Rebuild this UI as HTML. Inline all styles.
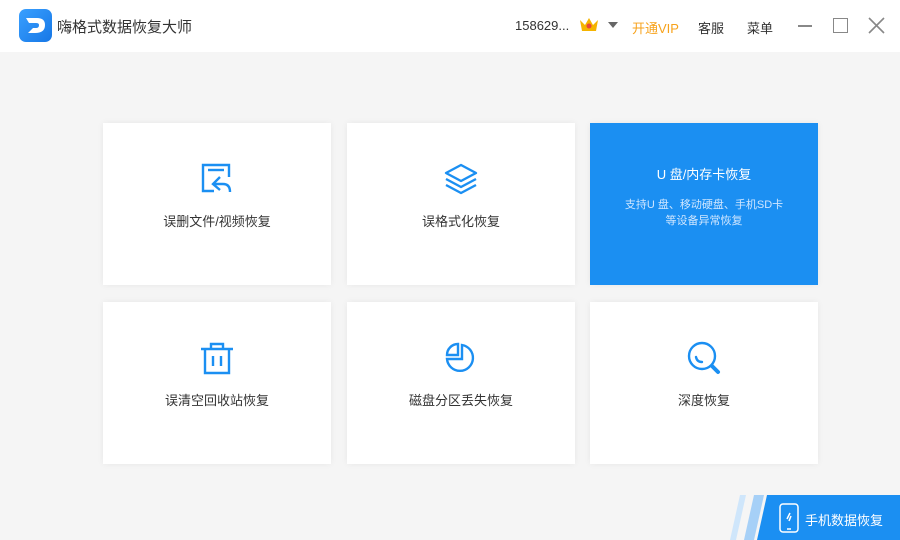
<!DOCTYPE html>
<html><head><meta charset="utf-8"><style>
*{margin:0;padding:0;box-sizing:border-box}
body{width:900px;height:540px;overflow:hidden;background:#f5f5f5;font-family:"Liberation Sans","Noto Sans CJK SC",sans-serif;position:relative}
.top{position:absolute;left:0;top:0;width:900px;height:52px;background:#fff}
.logo{position:absolute;left:19px;top:9px;width:33px;height:33px;border-radius:7px;background:linear-gradient(135deg,#3aa0ff,#1677e6)}
.title{position:absolute;left:57px;top:16px;font-size:15px;color:#333}
.t{position:absolute;top:18px;font-size:13px;color:#333}
.card{position:absolute;width:228px;height:162px;background:#fff;box-shadow:0 0 6px rgba(0,0,0,.06)}
.card svg{position:absolute;left:96px;top:38px}
.card .l{position:absolute;left:0;width:100%;text-align:center;top:88px;font-size:13px;color:#333}
.blue{background:#1b8ff2}
</style></head><body>
<div class="top">
<div class="logo"><svg width="33" height="33" viewBox="0 0 33 33"><path d="M7 9 H18 Q26 9 26 16 Q26 24 16 24 H9 L14 19 H17 Q20 19 20 16 Q20 14 17 14 H10 Z" fill="#fff"/></svg></div>
<div class="title">嗨格式数据恢复大师</div>
<div class="t" style="left:515px">158629...</div>
<svg style="position:absolute;left:578px;top:17px" width="22" height="16" viewBox="0 0 22 16"><path d="M2 3 L7 8 L11 1 L15 8 L20 3 L18 14 H4 Z" fill="#f5b400"/><circle cx="11" cy="9" r="2.5" fill="#e8473a"/></svg>
<svg style="position:absolute;left:608px;top:22px" width="10" height="6"><path d="M0 0 H10 L5 6Z" fill="#666"/></svg>
<div class="t" style="left:632px;color:#f7a21b">开通VIP</div>
<div class="t" style="left:698px">客服</div>
<div class="t" style="left:747px">菜单</div>
<div style="position:absolute;left:798px;top:25px;width:14px;height:1.5px;background:#888"></div>
<div style="position:absolute;left:833px;top:18px;width:15px;height:15px;border:1.5px solid #888"></div>
<svg style="position:absolute;left:868px;top:17px" width="17" height="17"><path d="M1 1 L16 16 M16 1 L1 16" stroke="#888" stroke-width="1.6"/></svg>
</div>

<div class="card" style="left:103px;top:123px">
<svg width="36" height="36" viewBox="0 0 36 36" fill="none" stroke="#1b8ff2" stroke-width="2.4"><path d="M15 30 H4 V4 H30 V16"/><path d="M9 9 H25"/><path d="M21 16 L14 23 L21 29 M14 23 H24 Q31 23 31 31"/></svg>
<div class="l">误删文件/视频恢复</div></div>
<div class="card" style="left:347px;top:123px">
<svg width="36" height="36" viewBox="0 0 36 36" fill="none" stroke="#1b8ff2" stroke-width="2.4" stroke-linejoin="round"><path d="M18 4 L33 12 L18 20 L3 12 Z"/><path d="M3 18 L18 26 L33 18"/><path d="M3 24 L18 32 L33 24"/></svg>
<div class="l">误格式化恢复</div></div>
<div class="card blue" style="left:590px;top:123px">
<div style="position:absolute;width:100%;text-align:center;top:41px;font-size:13px;color:#fff">U 盘/内存卡恢复</div>
<div style="position:absolute;width:100%;text-align:center;top:74px;font-size:11px;line-height:16px;color:#cfe6ff">支持U 盘、移动硬盘、手机SD卡<br>等设备异常恢复</div></div>

<div class="card" style="left:103px;top:302px">
<svg width="36" height="36" viewBox="0 0 36 36" fill="none" stroke="#1b8ff2" stroke-width="2.4"><path d="M2 9 H34 M12 9 V4 H24 V9 M6 9 V33 H30 V9 M14 16 V26 M22 16 V26"/></svg>
<div class="l">误清空回收站恢复</div></div>
<div class="card" style="left:347px;top:302px">
<svg width="36" height="36" viewBox="0 0 36 36" fill="none" stroke="#1b8ff2" stroke-width="2.4"><path d="M15 4 V15 H4 A11 11 0 0 1 15 4 Z"/><path d="M19 5 A13 13 0 1 1 4 19 H19 Z"/></svg>
<div class="l">磁盘分区丢失恢复</div></div>
<div class="card" style="left:590px;top:302px">
<svg width="36" height="36" viewBox="0 0 36 36" fill="none" stroke="#1b8ff2" stroke-width="2.4" stroke-linecap="round"><circle cx="16" cy="16" r="13"/><path d="M10 17 Q11 22 16 22"/><path d="M26 26 L32 32" stroke-width="4"/></svg>
<div class="l">深度恢复</div></div>

<svg style="position:absolute;left:720px;top:495px" width="180" height="45"><path d="M10 45 L20 0 H26 L16 45Z" fill="#cfe6fb"/><path d="M24 45 L34 0 H44 L34 45Z" fill="#a6d0f7"/><path d="M37 45 L47 0 H180 V45Z" fill="#1b8ff2"/></svg>
<svg style="position:absolute;left:779px;top:503px" width="20" height="30" viewBox="0 0 20 30" fill="none" stroke="#fff" stroke-width="1.5"><rect x="1" y="1" width="18" height="28" rx="3"/><path d="M8 26 H12"/><path d="M11 10 L8 16 M12 13 L10 18" /></svg>
<div style="position:absolute;left:805px;top:510px;font-size:13px;color:#fff">手机数据恢复</div>
</body></html>
